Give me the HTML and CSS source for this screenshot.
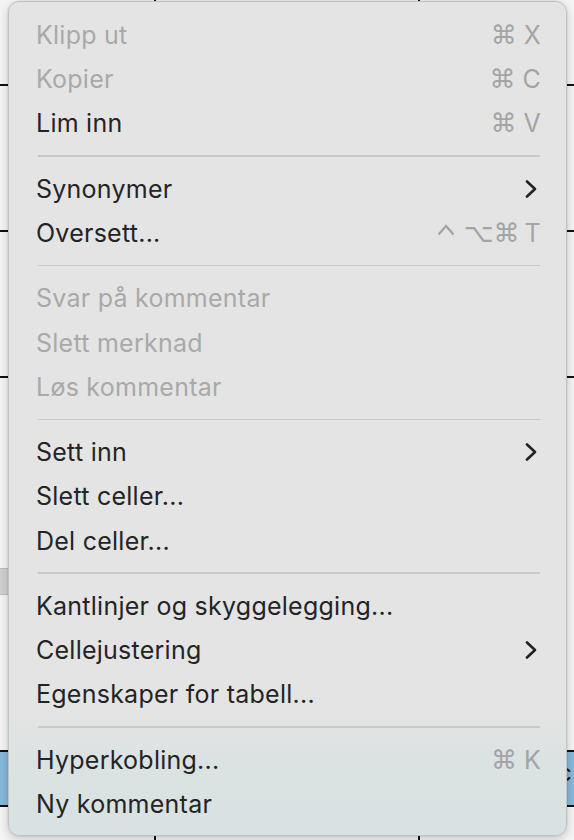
FILE: index.html
```html
<!DOCTYPE html>
<html lang="nb">
<head>
<meta charset="utf-8">
<title>Kontekstmeny</title>
<link rel="stylesheet" href="styles.css">
</head>
<body>
<div class="doc">
  <div class="tick tick-top t1"></div>
  <div class="tick tick-top t2"></div>
  <div class="tick tick-bot t1"></div>
  <div class="tick tick-bot t2"></div>
  <div class="hline left y1"></div>
  <div class="hline left y2"></div>
  <div class="hline left y3"></div>
  <div class="hline right y1"></div>
  <div class="hline right y2"></div>
  <div class="hline right y3"></div>
  <div class="grayband"></div>
  <div class="bluecell left-cell"></div>
  <div class="bluecell right-cell"><span>c</span></div>
</div>

<div class="menu">
  <div class="item disabled"><span class="label">Klipp ut</span><span class="sc"><span class="sym">⌘</span><span>X</span></span></div>
  <div class="item disabled"><span class="label">Kopier</span><span class="sc"><span class="sym">⌘</span><span>C</span></span></div>
  <div class="item"><span class="label">Lim inn</span><span class="sc"><span class="sym">⌘</span><span>V</span></span></div>
  <div class="sep"></div>
  <div class="item"><span class="label">Synonymer</span><svg class="chev" viewBox="0 0 12 18" width="12" height="18"><polyline points="2,1.5 10,9 2,16.5" fill="none" stroke="#222" stroke-width="2.6" stroke-linecap="round" stroke-linejoin="round"/></svg></div>
  <div class="item"><span class="label">Oversett...</span><span class="sc multi"><svg class="caret" viewBox="0 0 18 12" width="18" height="12"><polyline points="1.5,10.5 9,2 16.5,10.5" fill="none" stroke="#a4a4a4" stroke-width="2.4" stroke-linejoin="miter"/></svg><span class="sym opt">⌥</span><span class="sym">⌘</span><span>T</span></span></div>
  <div class="sep"></div>
  <div class="item disabled"><span class="label">Svar på kommentar</span></div>
  <div class="item disabled"><span class="label">Slett merknad</span></div>
  <div class="item disabled"><span class="label">Løs kommentar</span></div>
  <div class="sep"></div>
  <div class="item"><span class="label">Sett inn</span><svg class="chev" viewBox="0 0 12 18" width="12" height="18"><polyline points="2,1.5 10,9 2,16.5" fill="none" stroke="#222" stroke-width="2.6" stroke-linecap="round" stroke-linejoin="round"/></svg></div>
  <div class="item"><span class="label">Slett celler...</span></div>
  <div class="item"><span class="label">Del celler...</span></div>
  <div class="sep"></div>
  <div class="item"><span class="label">Kantlinjer og skyggelegging...</span></div>
  <div class="item"><span class="label">Cellejustering</span><svg class="chev" viewBox="0 0 12 18" width="12" height="18"><polyline points="2,1.5 10,9 2,16.5" fill="none" stroke="#222" stroke-width="2.6" stroke-linecap="round" stroke-linejoin="round"/></svg></div>
  <div class="item"><span class="label">Egenskaper for tabell...</span></div>
  <div class="sep"></div>
  <div class="item"><span class="label">Hyperkobling...</span><span class="sc"><span class="sym">⌘</span><span>K</span></span></div>
  <div class="item"><span class="label">Ny kommentar</span></div>
</div>
</body>
</html>
```

FILE: styles.css
```css
html, body {
  margin: 0;
  padding: 0;
}
body {
  width: 574px;
  height: 840px;
  overflow: hidden;
  position: relative;
  background: #f4f4f4;
  font-family: "Inter", "Noto Sans", "DejaVu Sans", sans-serif;
}

/* document content behind the menu */
.doc {
  position: absolute;
  inset: 0;
}
.tick {
  position: absolute;
  width: 2px;
  height: 6px;
  background: #111;
}
.tick-top { top: 0; }
.tick-bot { bottom: 0; }
.t1 { left: 154px; }
.t2 { left: 418px; }
.hline {
  position: absolute;
  height: 2px;
  width: 10px;
  background: #111;
}
.hline.left { left: 0; }
.hline.right { right: 0; }
.y1 { top: 84px; }
.y2 { top: 230px; }
.y3 { top: 376px; }
.grayband {
  position: absolute;
  left: 0;
  top: 568px;
  width: 10px;
  height: 27px;
  background: #cfcfcf;
  border-top: 1px solid #bdbdbd;
  border-bottom: 1px solid #bdbdbd;
  box-sizing: border-box;
}
.bluecell {
  position: absolute;
  top: 750px;
  height: 57px;
  width: 12px;
  background: #86b8d8;
  border-top: 2px solid #111;
  border-bottom: 2px solid #111;
  box-sizing: border-box;
  overflow: hidden;
}
.left-cell { left: 0; }
.right-cell { right: 0; }
.right-cell span {
  position: absolute;
  left: -4px;
  top: 6px;
  font-size: 24px;
  color: #111;
}

/* the menu */
.menu {
  position: absolute;
  left: 8px;
  top: 1px;
  width: 559px;
  height: 835px;
  box-sizing: border-box;
  padding: 11px 25px 0 27px;
  border-radius: 11px;
  background: linear-gradient(to bottom, #e4e4e4 0%, #e4e4e4 85%, #dae2e2 92%, #d9e2e2 100%);
  border: 1px solid #c2c2c2;
  box-shadow: 0 0 0 0.5px rgba(0,0,0,0.08), 0 3px 10px rgba(0,0,0,0.18);
  display: flex;
  flex-direction: column;
}
.item {
  height: 44.2px;
  flex: none;
  display: flex;
  align-items: center;
  justify-content: space-between;
  font-size: 25px;
  letter-spacing: 0.25px;
  color: #242424;
}
.item.disabled {
  color: #a9a9a9;
}
.sc {
  display: flex;
  align-items: center;
  gap: 7px;
  color: #a4a4a4;
}
.sc.multi {
  gap: 5px;
}
.sym {
  font-family: "DejaVu Sans", sans-serif;
  font-size: 26px;
  letter-spacing: 0;
}
.opt {
  margin-left: 4px;
  margin-right: -5px;
}
.caret {
  margin-top: -7px;
}
.chev {
  margin-right: 4px;
}
.sep {
  height: 21.2px;
  flex: none;
  display: flex;
  align-items: center;
  padding-left: 2px;
  margin-right: 1px;
}
.sep::after {
  content: "";
  display: block;
  width: 100%;
  height: 1.5px;
  background: #c9c9c9;
}
```
